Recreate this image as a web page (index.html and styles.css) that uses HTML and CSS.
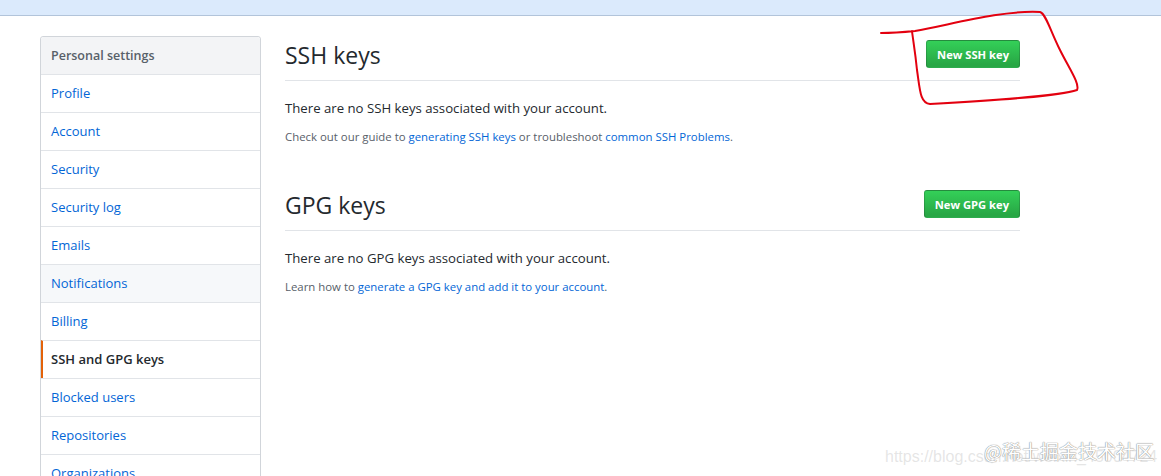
FILE: index.html
```html
<!DOCTYPE html>
<html lang="en">
<head>
    <link rel="stylesheet" href="styles.css">
</head>
<body>
    <div class="topbar"></div>

    <div class="page">
        <nav class="menu">
            <div class="menu-heading">Personal settings</div>
            <a class="menu-item" href="#">Profile</a>
            <a class="menu-item" href="#">Account</a>
            <a class="menu-item" href="#">Security</a>
            <a class="menu-item" href="#">Security log</a>
            <a class="menu-item" href="#">Emails</a>
            <a class="menu-item hover" href="#">Notifications</a>
            <a class="menu-item" href="#">Billing</a>
            <a class="menu-item selected" href="#">SSH and GPG keys</a>
            <a class="menu-item" href="#">Blocked users</a>
            <a class="menu-item" href="#">Repositories</a>
            <a class="menu-item" href="#">Organizations</a>
        </nav>

        <main class="content">
            <section class="keys">
                <div class="subhead">
                    <h2>SSH keys</h2>
                    <button class="btn">New SSH key</button>
                </div>
                <p class="blank">There are no SSH keys associated with your account.</p>
                <p class="note">Check out our guide to <a href="#">generating SSH keys</a> or troubleshoot <a href="#">common SSH Problems</a>.</p>
            </section>

            <section class="keys">
                <div class="subhead">
                    <h2>GPG keys</h2>
                    <button class="btn">New GPG key</button>
                </div>
                <p class="blank">There are no GPG keys associated with your account.</p>
                <p class="note">Learn how to <a href="#">generate a GPG key and add it to your account</a>.</p>
            </section>
        </main>
    </div>

    <!-- hand-drawn marker around the button -->
    <svg class="scribble" width="1161" height="476" viewBox="0 0 1161 476">
        <path d="M881,33 C895,33 905,32 915,31 C950,25 1000,10 1040,12 C1046,14 1050,30 1060,50 C1070,70 1080,84 1077,90 C1060,96 1000,100 930,104 C920,103 920,90 917,70 C915,50 913,40 912,31"
              fill="none" stroke="#e3000f" stroke-width="2" stroke-linecap="round"/>
    </svg>

    <div class="watermark-url">https://blog.csdn.net/weixin_45004724</div>
    <div class="watermark">@稀土掘金技术社区</div>
</body>
</html>
```

FILE: styles.css
```css
body {
    margin: 0;
    font-family: "Open Sans", "Noto Sans", sans-serif;
    font-size: 14px;
    color: #24292e;
    background: #fff;
    position: relative;
    height: 476px;
    overflow: hidden;
}

a {
    color: #0366d6;
    text-decoration: none;
}

.topbar {
    height: 15px;
    background: #dbeafc;
    border-bottom: 1px solid #b2c4da;
}

.page {
    display: flex;
    gap: 24px;
    padding: 20px 0 0 40px;
}

/* side menu */
.menu {
    width: 219px;
    flex-shrink: 0;
    border: 1px solid #d1d5da;
    border-radius: 3px;
    align-self: flex-start;
}

.menu-heading {
    height: 37px;
    line-height: 37px;
    padding-left: 10px;
    background: #f3f4f6;
    color: #586069;
    font-size: 12.5px;
    font-weight: 600;
    border-radius: 3px 3px 0 0;
}

.menu-item {
    display: block;
    height: 37px;
    line-height: 37px;
    padding-left: 10px;
    border-top: 1px solid #e1e4e8;
    font-size: 13px;
}

.menu-item.hover {
    background: #f6f8fa;
}

.menu-item.selected {
    color: #24292e;
    font-weight: 600;
    padding-left: 8px;
    border-left: 2px solid #e36209;
}

/* main column */
.content {
    width: 735px;
}

.keys {
    margin-bottom: 41px;
}

.subhead {
    display: flex;
    justify-content: space-between;
    align-items: center;
    height: 44px;
    border-bottom: 1px solid #e1e4e8;
}

.subhead h2 {
    margin: 0;
    font-size: 23px;
    font-weight: 400;
    padding-bottom: 6px;
}

.btn {
    font-family: inherit;
    font-size: 11.2px;
    font-weight: 700;
    color: #fff;
    height: 28px;
    padding: 0 10px;
    margin-bottom: 8px;
    background: linear-gradient(#34d058, #28a745 90%);
    border: 1px solid rgba(27, 31, 35, 0.2);
    border-radius: 3px;
}

.blank {
    margin: 17px 0 0;
    font-size: 13.2px;
    line-height: 20px;
}

.note {
    margin: 11px 0 0;
    font-size: 11.4px;
    line-height: 16px;
    color: #586069;
}

/* overlays on the screenshot */
.scribble {
    position: absolute;
    left: 0;
    top: 0;
    pointer-events: none;
}

.watermark-url {
    position: absolute;
    left: 885px;
    top: 448px;
    font-family: "Liberation Sans", sans-serif;
    font-size: 16px;
    color: rgba(180, 180, 180, 0.35);
    white-space: nowrap;
}

.watermark {
    position: absolute;
    left: 984px;
    top: 437px;
    font-family: "Noto Sans CJK SC", sans-serif;
    font-size: 19px;
    color: #fff;
    text-shadow: 0 0 1px #888, 0 0 1px #888;
    white-space: nowrap;
}
```
